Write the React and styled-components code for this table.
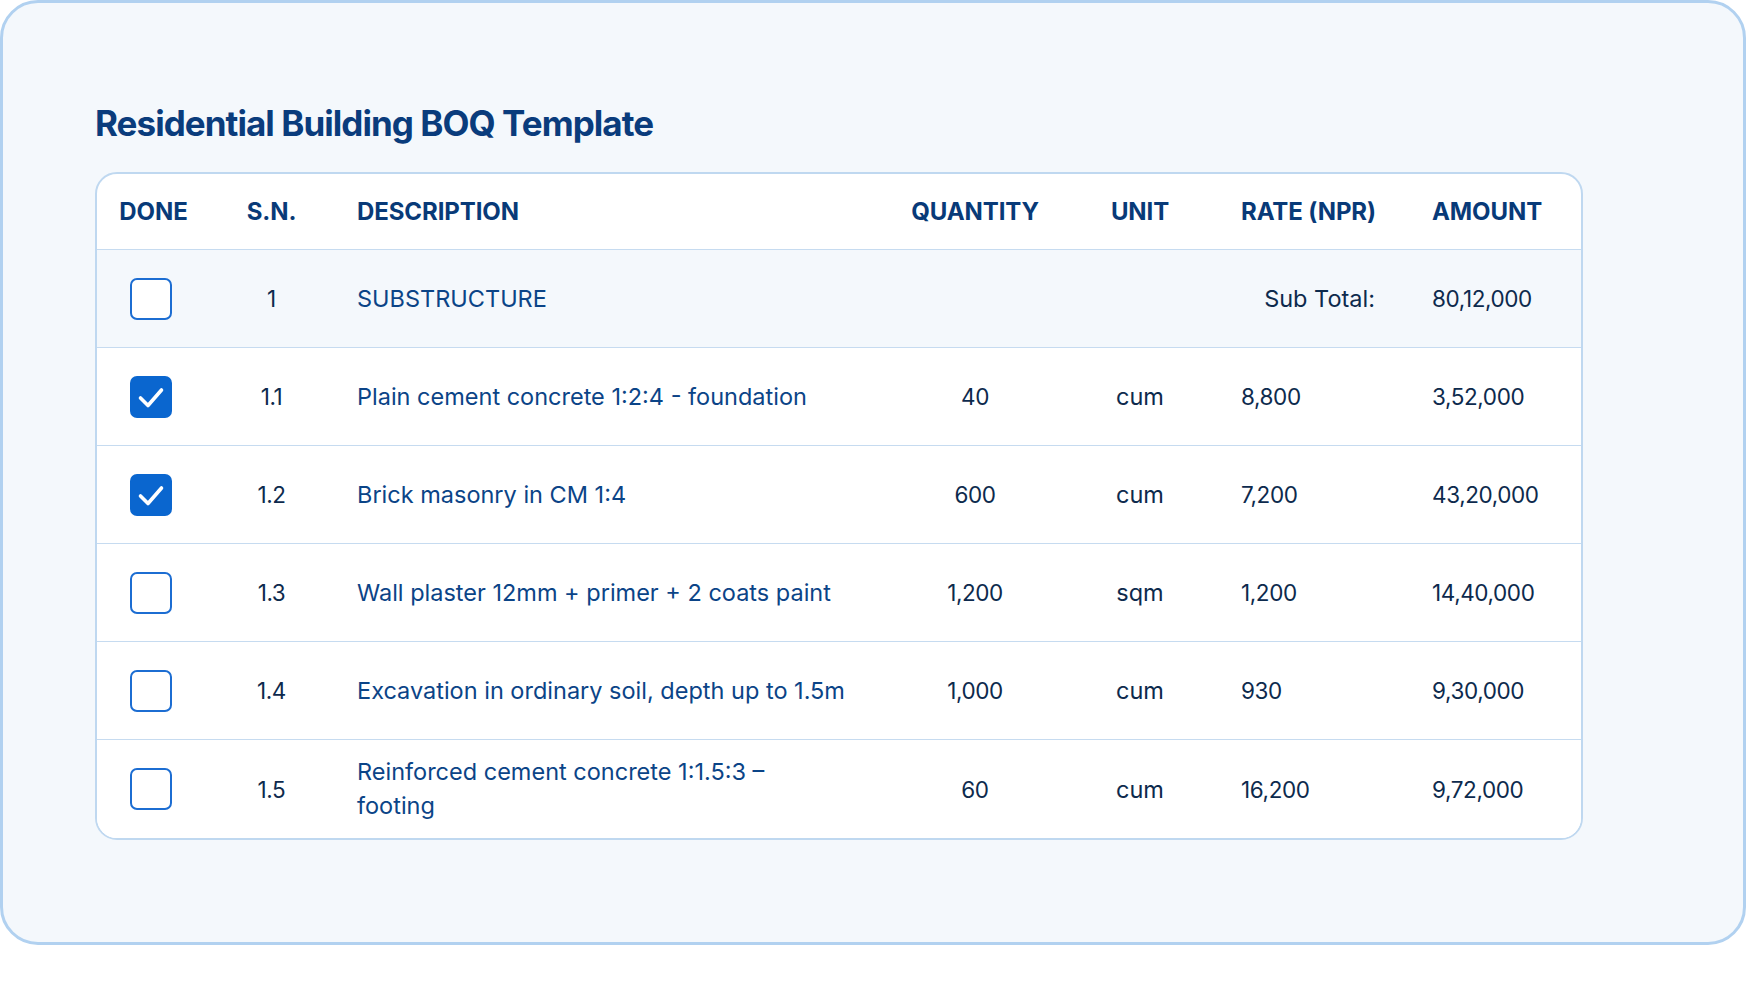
import styled, { createGlobalStyle } from "styled-components";

const GlobalStyle = createGlobalStyle`
  * { box-sizing: border-box; }
  body {
    margin: 0;
    background: #ffffff;
    font-family: Inter, "Noto Sans", sans-serif;
  }
`;

const COLUMNS = "113px 123px 555px 174px 156px 190px 1fr";

const items = [
  { sn: "1", desc: "SUBSTRUCTURE", group: true, subtotal: "80,12,000" },
  { sn: "1.1", desc: "Plain cement concrete 1:2:4 - foundation", qty: "40", unit: "cum", rate: "8,800", amount: "3,52,000", done: true },
  { sn: "1.2", desc: "Brick masonry in CM 1:4", qty: "600", unit: "cum", rate: "7,200", amount: "43,20,000", done: true },
  { sn: "1.3", desc: "Wall plaster 12mm + primer + 2 coats paint", qty: "1,200", unit: "sqm", rate: "1,200", amount: "14,40,000" },
  { sn: "1.4", desc: "Excavation in ordinary soil, depth up to 1.5m", qty: "1,000", unit: "cum", rate: "930", amount: "9,30,000" },
  { sn: "1.5", desc: "Reinforced cement concrete 1:1.5:3 –\nfooting", qty: "60", unit: "cum", rate: "16,200", amount: "9,72,000" },
];

const CheckIcon = () => (
  <svg width="42" height="42" viewBox="0 0 42 42" fill="none">
    <path
      d="M10.5 22 L18 29.5 L31.5 14"
      stroke="#ffffff"
      strokeWidth="3.6"
      strokeLinecap="round"
      strokeLinejoin="round"
    />
  </svg>
);

export default function App() {
  return (
    <>
      <GlobalStyle />
      <Card>
        <Title>Residential Building BOQ Template</Title>
        <Table>
          <HeaderRow>
            <HeadCell $align="center">DONE</HeadCell>
            <HeadCell $align="center">S.N.</HeadCell>
            <HeadCell>DESCRIPTION</HeadCell>
            <HeadCell $align="center">QUANTITY</HeadCell>
            <HeadCell $align="center">UNIT</HeadCell>
            <HeadCell $rate>RATE (NPR)</HeadCell>
            <HeadCell>AMOUNT</HeadCell>
          </HeaderRow>
          {items.map((item) => (
            <Row key={item.sn} $group={item.group}>
              <Cell $align="center">
                <Checkbox $checked={item.done}>{item.done && <CheckIcon />}</Checkbox>
              </Cell>
              <Cell $align="center" $num>{item.sn}</Cell>
              <Description>{item.desc}</Description>
              {item.group ? (
                <>
                  <Cell />
                  <Cell />
                  <Cell $rate $align="right">Sub Total:</Cell>
                  <Cell $num>{item.subtotal}</Cell>
                </>
              ) : (
                <>
                  <Cell $align="center" $num>{item.qty}</Cell>
                  <Cell $align="center">{item.unit}</Cell>
                  <Cell $rate $num>{item.rate}</Cell>
                  <Cell $num>{item.amount}</Cell>
                </>
              )}
            </Row>
          ))}
        </Table>
      </Card>
    </>
  );
}

const Card = styled.section`
  width: 100%;
  background: #f4f8fc;
  border: 3px solid #b1d1f0;
  border-radius: 38px;
  padding: 99px 160px 102px 92px;
`;

const Title = styled.h1`
  margin: 0 0 28px;
  font-size: 35px;
  line-height: 42px;
  font-weight: 700;
  letter-spacing: -0.95px;
  color: #0a3c7c;
`;

const Table = styled.div`
  width: 1488px;
  background: #ffffff;
  border: 2px solid #bfd8f0;
  border-radius: 22px;
  overflow: hidden;
`;

const HeaderRow = styled.div`
  display: grid;
  grid-template-columns: ${COLUMNS};
  height: 76px;
  align-items: center;
  border-bottom: 1px solid #c6dbf0;
`;

const Row = styled.div`
  display: grid;
  grid-template-columns: ${COLUMNS};
  height: 98px;
  align-items: center;
  background: ${(p) => (p.$group ? "#f4f8fc" : "#ffffff")};
  border-bottom: 1px solid #c6dbf0;

  &:last-child {
    border-bottom: none;
  }
`;

const HeadCell = styled.div`
  font-size: 24px;
  font-weight: 700;
  letter-spacing: -0.1px;
  color: #083a78;
  white-space: nowrap;
  text-align: ${(p) => p.$align || "left"};
  padding: ${(p) => (p.$align === "center" ? "0" : p.$rate ? "0 0 0 23px" : "0 0 0 24px")};
`;

const Cell = styled.div`
  display: flex;
  justify-content: ${(p) =>
    p.$align === "center" ? "center" : p.$align === "right" ? "flex-end" : "flex-start"};
  align-items: center;
  font-size: ${(p) => (p.$num ? "22.5px" : "23.5px")};
  letter-spacing: ${(p) => (p.$num ? "-0.4px" : "0")};
  color: #0d2a4d;
  white-space: nowrap;
  padding: ${(p) => (p.$align === "center" ? "0" : p.$rate ? "0 33px 0 23px" : "0 0 0 24px")};
`;

const Description = styled.div`
  padding-left: 24px;
  font-size: 23.5px;
  line-height: 34px;
  color: #0b4487;
  white-space: pre-line;
`;

const Checkbox = styled.span`
  display: flex;
  width: 42px;
  height: 42px;
  border-radius: 7px;
  background: ${(p) => (p.$checked ? "#0a66cf" : "#ffffff")};
  border: ${(p) => (p.$checked ? "none" : "2.5px solid #1c6dd2")};
  margin-left: -6px;
`;
